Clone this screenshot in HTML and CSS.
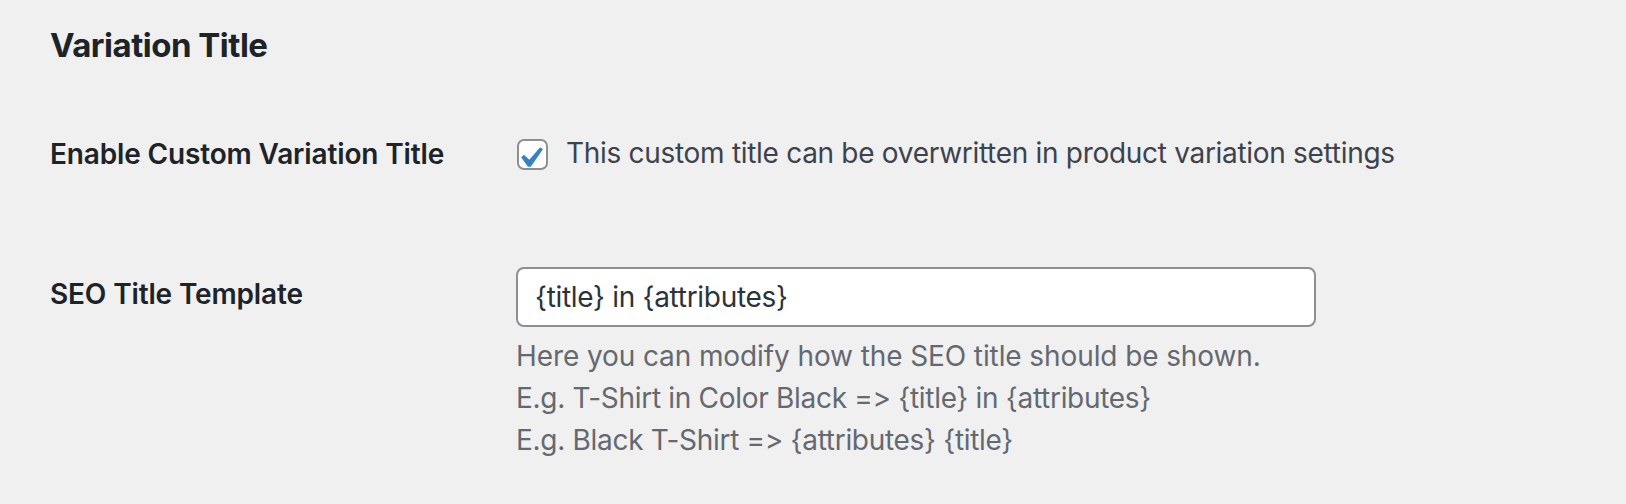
FILE: index.html
```html
<!DOCTYPE html>
<html lang="en">
<head>
<meta charset="utf-8">
<title>Variation Title</title>
<link rel="stylesheet" href="styles.css">
</head>
<body>
<main class="page">
  <h2 class="section-title">Variation Title</h2>
  <div class="form-table">
    <div class="row row-check">
      <div class="row-label">Enable Custom Variation Title</div>
      <div class="row-field">
        <label class="check">
          <span class="check-box">
            <svg class="check-mark" viewBox="0 0 20 20" width="42" height="42" aria-hidden="true"><path d="M14.83 4.89l1.34.94-5.81 8.38H9.02L5.78 9.67l1.34-1.25 2.57 2.4z" fill="#3582c4"/></svg>
          </span>
          <span class="check-text">This custom title can be overwritten in product variation settings</span>
        </label>
      </div>
    </div>
    <div class="row row-input">
      <div class="row-label">SEO Title Template</div>
      <div class="row-field">
        <div class="text-input">{title} in {attributes}</div>
        <p class="description"><span class="desc-line">Here you can modify how the SEO title should be shown.</span><span class="desc-line desc-example">E.g. T-Shirt in Color Black =&gt; {title} in {attributes}</span><span class="desc-line desc-example">E.g. Black T-Shirt =&gt; {attributes} {title}</span></p>
      </div>
    </div>
  </div>
</main>
</body>
</html>
```
FILE: styles.css
```css
html, body {
  margin: 0;
  padding: 0;
  background: #f0f0f1;
}
body {
  font-family: Inter, "Noto Sans", "Liberation Sans", sans-serif;
  font-variant-ligatures: none;
  font-feature-settings: "calt" 0, "liga" 0;
  color: #1d2327;
}
.page {
  padding: 23px 0 0 50px;
}
.section-title {
  margin: 0;
  font-size: 33px;
  line-height: 44px;
  font-weight: 700;
  letter-spacing: -0.5px;
  color: #1d2327;
}
.form-table {
  margin-top: 29px;
  display: flex;
  flex-direction: column;
}
.row {
  display: grid;
  grid-template-columns: 466px 800px;
}
.row-label {
  font-size: 28px;
  line-height: 36px;
  font-weight: 600;
  letter-spacing: -0.15px;
  color: #1d2327;
}
.row-check {
  height: 141px;
}
.row-check .row-label {
  padding-top: 40px;
}
.row-check .row-field {
  padding-top: 39px;
}
.check {
  display: flex;
  align-items: flex-start;
}
.check-box {
  position: relative;
  flex: none;
  box-sizing: border-box;
  width: 31px;
  height: 31px;
  margin-top: 4px;
  margin-left: 1px;
  margin-right: 18px;
  border: 2px solid #8c8f94;
  border-radius: 7px;
  background: #fff;
}
.check-mark {
  position: absolute;
  left: -10px;
  top: -4px;
}
.check-text {
  font-size: 28px;
  line-height: 36px;
  letter-spacing: -0.3px;
  color: #3c434a;
  white-space: nowrap;
}
.row-input .row-label {
  padding-top: 39px;
}
.row-input .row-field {
  padding-top: 30px;
}
.text-input {
  box-sizing: border-box;
  width: 800px;
  height: 60px;
  border: 2px solid #8c8f94;
  border-radius: 8px;
  background: #fff;
  padding: 0 17px;
  font-size: 28px;
  line-height: 56px;
  letter-spacing: -0.3px;
  color: #2c3338;
}
.description {
  margin: 8px 0 0;
  font-size: 28px;
  line-height: 42px;
  letter-spacing: -0.1px;
  color: #646970;
}
.desc-line {
  display: block;
}
.desc-example {
  letter-spacing: -0.3px;
}
```
